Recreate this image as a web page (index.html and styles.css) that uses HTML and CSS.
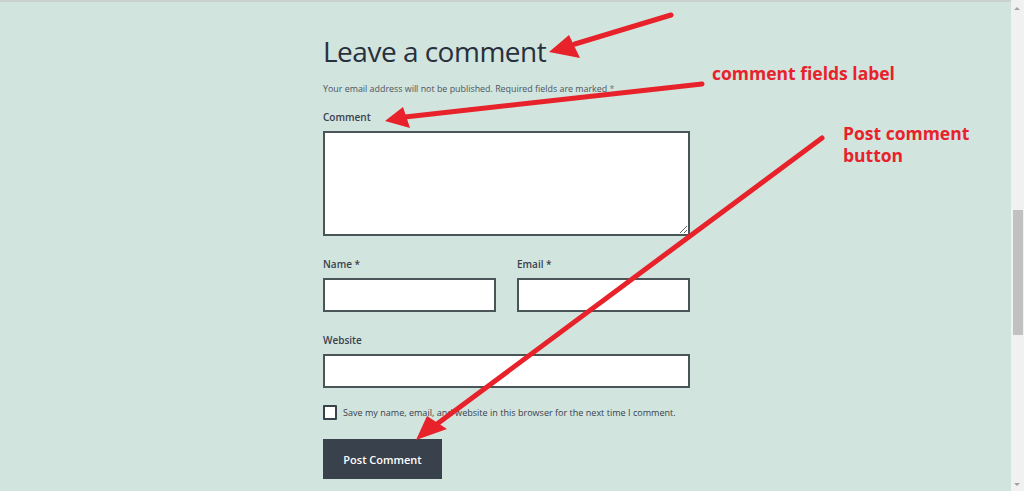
FILE: index.html
```html
<!DOCTYPE html>
<html lang="en">
<head>
<meta charset="utf-8">
<title>Leave a comment</title>
<link rel="stylesheet" href="styles.css">
</head>
<body>
<div class="page">
  <main class="content">
    <section class="comment-respond">
      <h2 class="reply-title">Leave a comment</h2>
      <p class="notes">Your email address will not be published. Required fields are marked <span class="req">*</span></p>
      <div class="field">
        <label class="lbl">Comment</label>
        <textarea class="ta"></textarea>
      </div>
      <div class="row">
        <div class="field half">
          <label class="lbl">Name *</label>
          <input class="inp" type="text">
        </div>
        <div class="field half">
          <label class="lbl">Email *</label>
          <input class="inp" type="text">
        </div>
      </div>
      <div class="field">
        <label class="lbl">Website</label>
        <input class="inp" type="text">
      </div>
      <div class="consent">
        <span class="box"></span>
        <span class="consent-text">Save my name, email, and website in this browser for the next time I comment.</span>
      </div>
      <button class="submit">Post Comment</button>
    </section>
  </main>
  <div class="scrollbar">
    <span class="sb-up"></span>
    <span class="sb-thumb"></span>
    <span class="sb-down"></span>
  </div>
</div>
<div class="note note-label">comment fields label</div>
<div class="note note-button">Post comment<br>button</div>
<svg class="arrows" width="1024" height="491" viewBox="0 0 1024 491">
  <g stroke="#e8222b" stroke-width="5" stroke-linecap="round" fill="none">
    <line x1="671" y1="15" x2="575" y2="44"/>
    <line x1="702" y1="84" x2="405" y2="117"/>
    <line x1="822" y1="138" x2="437" y2="424"/>
  </g>
  <g fill="#e8222b">
    <polygon points="549,52 569,35 580,58"/>
    <polygon points="385,121 403,107 410,128"/>
    <polygon points="416,440 427,416 447,429"/>
  </g>
</svg>
</body>
</html>
```
FILE: styles.css
```css
html, body {
  margin: 0;
  padding: 0;
}
body {
  background: #d1e4dd;
  font-family: "Open Sans", "Noto Sans", sans-serif;
  color: #28303d;
  width: 1024px;
  height: 491px;
  overflow: hidden;
  position: relative;
}
.page {
  display: flex;
  height: 491px;
  border-top: 2px solid #c9d2ce;
  box-sizing: border-box;
}
.content {
  flex: 1;
  padding-left: 323px;
}
.comment-respond {
  width: 367px;
}
.reply-title {
  margin: 30px 0 0;
  font-weight: 400;
  font-size: 28px;
  line-height: 38px;
  letter-spacing: -0.5px;
  color: #28303d;
}
.notes {
  margin: 12px 0 0;
  font-size: 8.9px;
  line-height: 14px;
  color: #4d5560;
}
.req { color: #777; }
.field {
  display: flex;
  flex-direction: column;
}
.lbl {
  font-size: 10px;
  font-weight: 600;
  line-height: 14px;
  color: #39414d;
}
.comment-respond > .field:nth-of-type(1) { margin-top: 14px; }
.ta {
  margin-top: 7px;
  height: 105px;
  box-sizing: border-box;
  border: 2px solid #4a5557;
  background: #fff;
  resize: vertical;
  width: 367px;
  padding: 0;
}
.row {
  display: flex;
  gap: 21px;
  margin-top: 21px;
}
.half { width: 173px; }
.inp {
  margin-top: 7px;
  height: 34px;
  box-sizing: border-box;
  border: 2px solid #4a5557;
  background: #fff;
  width: 100%;
  padding: 0;
}
.row + .field { margin-top: 21px; }
.consent {
  margin-top: 17px;
  display: flex;
  align-items: center;
  gap: 6px;
}
.box {
  width: 14px;
  height: 15px;
  box-sizing: border-box;
  border: 2px solid #39414d;
  background: #fff;
  border-radius: 1px;
}
.consent-text {
  font-size: 9.05px;
  color: #39414d;
}
.submit {
  margin-top: 19px;
  width: 119px;
  height: 40px;
  background: #39414d;
  color: #fff;
  border: none;
  font-family: "Open Sans", "Noto Sans", sans-serif;
  font-size: 11px;
  font-weight: 600;
  padding: 0;
}
.scrollbar {
  width: 13px;
  background: #f1f1f1;
  position: relative;
  margin-top: -2px;
}
.sb-up, .sb-down {
  position: absolute;
  left: 3px;
  width: 0;
  height: 0;
  border-left: 3px solid transparent;
  border-right: 3px solid transparent;
}
.sb-up { top: 7px; border-bottom: 3px solid #a3a3a3; }
.sb-down { bottom: 5px; border-top: 3px solid #a3a3a3; }
.sb-thumb {
  position: absolute;
  left: 2px;
  width: 10px;
  top: 210px;
  height: 125px;
  background: #c1c1c1;
}
.note {
  position: absolute;
  color: #e8222b;
  font-family: "Open Sans", "Noto Sans", sans-serif;
  font-weight: 700;
  font-size: 17.5px;
  line-height: 22px;
}
.note-label { left: 712px; top: 62px; }
.note-button { left: 843px; top: 122px; }
.arrows {
  position: absolute;
  left: 0;
  top: 0;
}
```
